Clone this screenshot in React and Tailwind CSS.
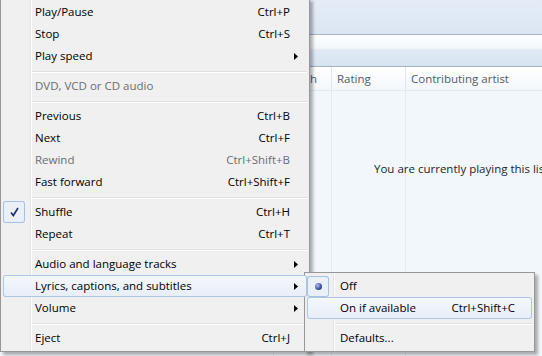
import React from "react";

const FONT = { fontFamily: '"Open Sans", "Noto Sans", sans-serif' };

const mainItems = [
  { label: "Play/Pause", key: "Ctrl+P" },
  { label: "Stop", key: "Ctrl+S" },
  { label: "Play speed", sub: true },
  { sep: true },
  { label: "DVD, VCD or CD audio", disabled: true },
  { sep: true },
  { label: "Previous", key: "Ctrl+B" },
  { label: "Next", key: "Ctrl+F" },
  { label: "Rewind", key: "Ctrl+Shift+B", disabled: true },
  { label: "Fast forward", key: "Ctrl+Shift+F" },
  { sep: true },
  { label: "Shuffle", key: "Ctrl+H", checked: true },
  { label: "Repeat", key: "Ctrl+T" },
  { sep: true },
  { label: "Audio and language tracks", sub: true },
  { label: "Lyrics, captions, and subtitles", sub: true, active: true },
  { label: "Volume", sub: true },
  { sep: true },
  { label: "Eject", key: "Ctrl+J" },
];

const subItems = [
  { label: "Off", radio: true },
  { label: "On if available", key: "Ctrl+Shift+C", active: true },
  { sep: true },
  { label: "Defaults..." },
];

const Arrow = () => (
  <svg width="4" height="7" viewBox="0 0 4 7" className="ml-[4px]">
    <polygon points="0,0 4,3.5 0,7" fill="#000" />
  </svg>
);

const Check = () => (
  <svg width="9" height="10" viewBox="0 0 9 10">
    <path d="M1 5.5 L3.3 8.5 L8 1" fill="none" stroke="#1d2c6c" strokeWidth="1.6" />
  </svg>
);

const MenuItem = ({ item, gutter }) => {
  if (item.sep) {
    return (
      <div className="h-[8px] pt-[4px]" style={{ paddingLeft: gutter - 4 }}>
        <div className="h-[1px] bg-[#e0e0e0]" />
        <div className="h-[1px] bg-white" />
      </div>
    );
  }
  return (
    <div
      className={
        "relative z-10 flex h-[22px] items-center rounded-[3px] " +
        (item.active
          ? "bg-gradient-to-b from-[#f5f8fc] to-[#e7eef8] shadow-[inset_0_0_0_1px_#adc6e6]"
          : "")
      }
    >
      <div className="flex h-[22px] shrink-0 items-center" style={{ width: gutter }}>
        {item.checked && (
          <div className="flex h-[22px] w-[22px] items-center justify-center rounded-[3px] bg-[#eaf0f8] shadow-[inset_0_0_0_1px_#a9c0de]">
            <Check />
          </div>
        )}
        {item.radio && (
          <div className="flex h-[21px] w-[22px] items-center justify-center rounded-[3px] bg-[#eaf0f8] shadow-[inset_0_0_0_1px_#a9c0de]">
            <div className="h-[7px] w-[7px] rounded-full bg-[radial-gradient(circle_at_35%_35%,#b4bdf0,#3d4b9c_60%,#27336f)]" />
          </div>
        )}
      </div>
      <div className={"flex-1 whitespace-nowrap " + (item.disabled ? "text-[#6d6d6d]" : "text-black")}>
        {item.label}
      </div>
      {item.key && (
        <div className={"whitespace-nowrap " + (item.disabled ? "text-[#6d6d6d]" : "text-black")}>{item.key}</div>
      )}
      <div className="flex w-[17px] shrink-0 items-center">{item.sub && <Arrow />}</div>
    </div>
  );
};

const Menu = ({ items, gutter, lineAt, className }) => (
  <div
    className={
      "absolute border border-[#979797] bg-[#f0f0f0] p-[2px] shadow-[3px_3px_3px_rgba(0,0,0,0.3)] " + className
    }
  >
    {/* gutter line */}
    <div className="absolute top-0 bottom-0 flex" style={{ left: lineAt }}>
      <div className="w-[1px] bg-[#e2e3e3]" />
      <div className="w-[1px] bg-white" />
    </div>
    {items.map((it, i) => (
      <MenuItem key={i} item={it} gutter={gutter} />
    ))}
  </div>
);

export default function App() {
  return (
    <div className="relative h-[356px] w-[542px] overflow-hidden bg-[#f2f7fc] text-[11.5px]" style={FONT}>
      {/* window behind the menu */}
      <div className="flex h-full flex-col">
        <div className="h-[35px] shrink-0 border-b border-[#a8b5c7] bg-gradient-to-b from-[#e4ecf7] to-[#dbe6f3]" />
        <div className="h-[32px] shrink-0 border-b border-[#a3b2c5] bg-[linear-gradient(to_bottom,#fdfeff_0%,#f3f7fc_42%,#e0e9f5_48%,#d9e4f2_100%)]" />
        <div className="flex h-[24px] shrink-0 border-b border-[#e1e9f3] bg-gradient-to-b from-white to-[#f3f7fc] text-[#4f5b6b]">
          <div className="w-[274px] border-r border-[#dfe6ee]" />
          <div className="flex w-[58px] items-center justify-end border-r border-[#dfe6ee] pr-[14px]">Length</div>
          <div className="flex w-[74px] items-center border-r border-[#dfe6ee] pl-[5px]">Rating</div>
          <div className="flex flex-1 items-center pl-[5px] whitespace-nowrap">Contributing artist</div>
        </div>
        <div className="relative flex flex-1">
          <div className="w-[274px] border-r border-[#e3ebf5]" />
          <div className="w-[58px] border-r border-[#e3ebf5]" />
          <div className="w-[74px] border-r border-[#e3ebf5]" />
          <div className="flex-1" />
          <div className="absolute left-[374px] top-[69px] whitespace-nowrap text-[#1e1e1e]">
            You are currently playing this list
          </div>
        </div>
      </div>

      <Menu items={mainItems} gutter={32} lineAt={29} className="left-0 top-[-2px] w-[310px]" />
      <Menu items={subItems} gutter={33} lineAt={28} className="left-[304px] top-[272px] w-[231px]" />
    </div>
  );
}
